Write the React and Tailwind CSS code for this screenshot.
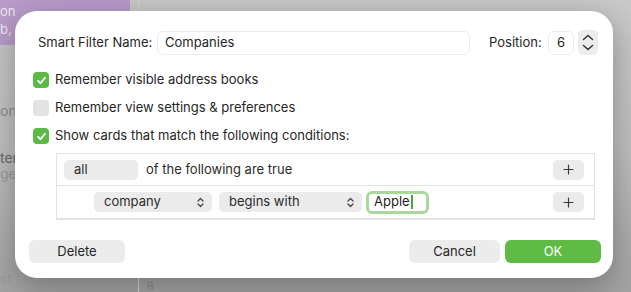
import React from 'react';

const font = { fontFamily: 'Inter, "Noto Sans", "Liberation Sans", sans-serif' };

function Check({ on }) {
    return (
        <span className={`flex h-[16px] w-[16px] shrink-0 items-center justify-center rounded-[4px] ${on ? 'bg-[#5cb946]' : 'bg-[#e3e3e3]'}`}>
            {on && (
                <svg width="11" height="11" viewBox="0 0 12 12" fill="none">
                    <path d="M2.3 6.4 L4.9 9 L9.8 3" stroke="white" strokeWidth="2" strokeLinecap="round" strokeLinejoin="round" />
                </svg>
            )}
        </span>
    );
}

function UpDown() {
    return (
        <svg width="7" height="11" viewBox="0 0 7 11" fill="none">
            <path d="M1 4 L3.5 1.5 L6 4" stroke="#444" strokeWidth="1.3" strokeLinecap="round" strokeLinejoin="round" />
            <path d="M1 7 L3.5 9.5 L6 7" stroke="#444" strokeWidth="1.3" strokeLinecap="round" strokeLinejoin="round" />
        </svg>
    );
}

function Popup({ label, w }) {
    return (
        <div className={`flex h-[20px] items-center justify-between rounded-[5px] bg-[#ebebeb] pl-[10px] pr-[8px] text-[#2b2b2b] ${w}`}>
            <span>{label}</span>
            <UpDown />
        </div>
    );
}

function Plus() {
    return (
        <div className="flex h-[20px] w-[31px] items-center justify-center rounded-[5px] bg-[#ebebeb]">
            <svg width="11" height="11" viewBox="0 0 11 11">
                <path d="M5.5 1 V10 M1 5.5 H10" stroke="#3a3a3a" strokeWidth="1.2" strokeLinecap="round" />
            </svg>
        </div>
    );
}

export default function App() {
    return (
        <div className="relative h-[292px] w-[631px] overflow-hidden bg-gradient-to-b from-[#c9c9c9] via-[#bfbfbf] to-[#a2a2a2] text-[13px]" style={font}>
            {/* window behind the sheet */}
            <div className="absolute left-0 top-0 h-[45px] w-[130px] bg-[#b89cc9] pt-[2px] text-[13px] leading-[18px] text-[#efe6f4]">
                <div>on</div>
                <div>b, (</div>
            </div>
            <div className="absolute left-[138px] top-0 h-full w-px bg-[#d2d2d2]" />
            <div className="absolute left-0 top-[100px] text-[14px] text-[#8a8a8a]">on</div>
            <div className="absolute left-0 top-[150px] text-[14px] leading-[16px] text-[#6a6a6a]">
                <div>ter</div>
                <div className="text-[#9a9a9a]">ger</div>
            </div>
            <div className="absolute left-0 top-[268px] text-[14px] text-[#9a9a9a]">st</div>
            <div className="absolute left-[147px] top-[281px] text-[10px] font-semibold leading-[11px] text-[#8e8e8e]">B</div>

            <div className="relative pl-[15px] pt-[11px]">
                <div className="flex h-[267px] w-[598px] flex-col rounded-[22px] bg-white pl-[14px] pr-[12px] pt-[19px] text-[#262626] shadow-[0_8px_30px_rgba(0,0,0,0.3)]">
                    <div className="flex items-center">
                        <span className="ml-[9px] w-[119px]">Smart Filter Name:</span>
                        <div className="flex h-[24px] w-[313px] items-center rounded-[6px] border border-[#ececec] px-[7px]">Companies</div>
                        <span className="ml-[19px] w-[59px]">Position:</span>
                        <div className="flex h-[24px] w-[26px] items-center justify-center rounded-[6px] border border-[#ececec]">6</div>
                        <div className="ml-[4px] flex h-[25px] w-[20px] flex-col items-center justify-center gap-[3px] rounded-[5px] bg-[#ececec]">
                            <svg width="12" height="7" viewBox="0 0 12 7" fill="none">
                                <path d="M1.5 5.5 L6 1.5 L10.5 5.5" stroke="#333" strokeWidth="1.5" strokeLinecap="round" strokeLinejoin="round" />
                            </svg>
                            <svg width="12" height="7" viewBox="0 0 12 7" fill="none">
                                <path d="M1.5 1.5 L6 5.5 L10.5 1.5" stroke="#333" strokeWidth="1.5" strokeLinecap="round" strokeLinejoin="round" />
                            </svg>
                        </div>
                    </div>

                    <div className="mt-[15px] flex flex-col gap-[8px] pl-[4px]">
                        <label className="flex h-[20px] items-center gap-[6px]"><Check on /><span>Remember visible address books</span></label>
                        <label className="flex h-[20px] items-center gap-[6px]"><Check /><span>Remember view settings &amp; preferences</span></label>
                        <label className="flex h-[20px] items-center gap-[6px]"><Check on /><span>Show cards that match the following conditions:</span></label>
                    </div>

                    <div className="ml-[27px] mt-[7px] w-[539px] border border-b-2 border-[#e2e2e2]">
                        <div className="flex h-[32px] items-center border-b border-[#e2e2e2] pl-[7px] pr-[10px]">
                            <div className="flex h-[20px] w-[74px] items-center rounded-[5px] bg-[#ebebeb] pl-[10px] text-[#2b2b2b]">all</div>
                            <span className="ml-[8px] flex-1 text-[#2b2b2b]">of the following are true</span>
                            <Plus />
                        </div>
                        <div className="flex h-[32px] items-center pl-[37px] pr-[10px]">
                            <Popup label="company" w="w-[118px]" />
                            <div className="ml-[7px]"><Popup label="begins with" w="w-[143px]" /></div>
                            <div className="ml-[4px] flex h-[23px] w-[63px] items-center rounded-[6px] border-[3px] border-[#a9d89a] pl-[5px] text-[#1e1e1e]">
                                <span>Apple</span>
                                <span className="ml-px h-[14px] w-[2px] bg-[#49a933]" />
                            </div>
                            <div className="flex-1" />
                            <Plus />
                        </div>
                    </div>

                    <div className="mt-[20px] flex items-center">
                        <button className="h-[23px] w-[96px] rounded-[6px] bg-[#ececec] text-[#262626]">Delete</button>
                        <div className="flex-1" />
                        <button className="h-[23px] w-[91px] rounded-[6px] bg-[#ececec] text-[#262626]">Cancel</button>
                        <button className="ml-[5px] h-[23px] w-[96px] rounded-[6px] bg-[#5fba46] text-white">OK</button>
                    </div>
                </div>
            </div>
        </div>
    );
}
